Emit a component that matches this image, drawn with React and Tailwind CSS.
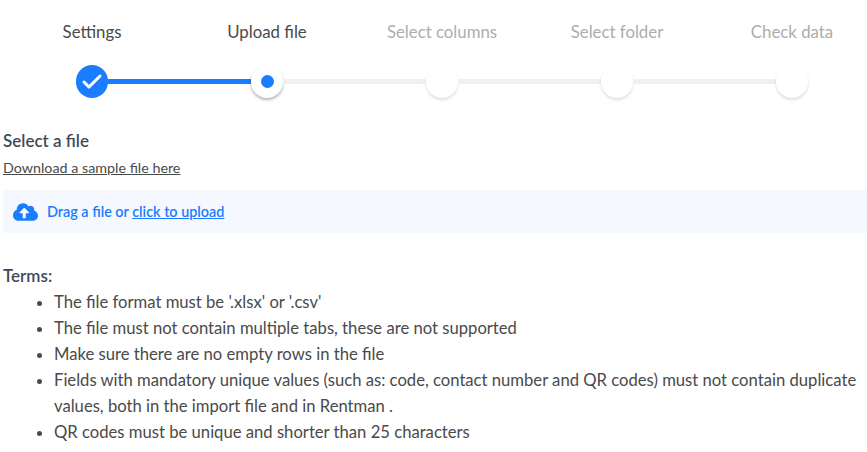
import React from 'react';
import { Check } from 'lucide-react';

const steps = [
  { label: 'Settings', state: 'done' },
  { label: 'Upload file', state: 'active' },
  { label: 'Select columns', state: 'todo' },
  { label: 'Select folder', state: 'todo' },
  { label: 'Check data', state: 'todo' },
];

const terms = [
  "The file format must be '.xlsx' or '.csv'",
  'The file must not contain multiple tabs, these are not supported',
  'Make sure there are no empty rows in the file',
  'Fields with mandatory unique values (such as: code, contact number and QR codes) must not contain duplicate values, both in the import file and in Rentman .',
  'QR codes must be unique and shorter than 25 characters',
];

function StepDot({ state }) {
  if (state === 'done') {
    return (
      <div className="w-8 h-[33px] shrink-0 rounded-full bg-[#1a7dff] text-white flex items-center justify-center">
        <Check size={24} strokeWidth={3} />
      </div>
    );
  }
  if (state === 'active') {
    return (
      <div className="w-8 h-[33px] shrink-0 rounded-full bg-white flex items-center justify-center shadow-[0_2px_3px_rgba(0,0,0,0.3)]">
        <div className="w-[13px] h-[13px] rounded-full bg-[#1a7dff]" />
      </div>
    );
  }
  return <div className="w-8 h-[33px] shrink-0 rounded-full bg-white shadow-[0_2px_3px_rgba(0,0,0,0.13)]" />;
}

export default function App() {
  return (
    <div className="w-[867px] h-[452px] overflow-hidden bg-white font-['Lato','Noto_Sans',sans-serif] text-[#4a4a4a]">
      <div className="flex w-[875px] ml-[4.5px] pt-[21px]">
        {steps.map((step) => (
          <div
            key={step.label}
            className={`w-[175px] shrink-0 text-center text-[16.8px] leading-[22px] ${step.state === 'todo' ? 'text-[#adadad]' : 'text-[#4a4a4a]'}`}
          >
            {step.label}
          </div>
        ))}
      </div>

      <div className="flex items-center ml-[76px] mt-[22px] w-[748px]">
        {steps.map((step, i) => (
          <React.Fragment key={step.label}>
            <StepDot state={step.state} />
            {i < steps.length - 1 && (
              <div className={`w-[143px] h-[5px] ${i === 0 ? 'bg-[#1a7dff]' : 'bg-[#f0f0f0]'}`} />
            )}
          </React.Fragment>
        ))}
      </div>

      <div className="pl-[3px] mt-[32px]">
        <h2 className="text-[17px] leading-[22px] font-semibold text-[#3f4a59]">Select a file</h2>
        <a className="block mt-[6px] text-[14.3px] leading-[20px] underline text-[#4a4a4a]">Download a sample file here</a>

        <div className="flex items-center mt-[12px] h-[43px] pl-[10px] bg-[#f5f8ff] text-[#1a7dff] text-[14.4px] font-semibold">
          <svg viewBox="0 0 640 512" className="w-[25px] h-[20px] fill-current">
            <path d="M537.6 226.6c4.1-10.7 6.4-22.4 6.4-34.6 0-53-43-96-96-96-19.7 0-38.1 6-53.3 16.2C367 64.2 315.3 32 256 32c-88.4 0-160 71.6-160 160 0 2.7.1 5.4.2 8.1C40.2 219.8 0 273.2 0 336c0 79.5 64.5 144 144 144h368c70.7 0 128-57.3 128-128 0-61.9-44-113.6-102.4-125.4zM393.4 288H328v112c0 8.8-7.2 16-16 16h-48c-8.8 0-16-7.2-16-16V288h-65.4c-14.3 0-21.4-17.2-11.3-27.3l105.4-105.4c6.2-6.2 16.4-6.2 22.6 0l105.4 105.4c10.1 10.1 2.9 27.3-11.3 27.3z" />
          </svg>
          <span className="ml-[9px]">
            Drag a file or <a className="underline">click to upload</a>
          </span>
        </div>

        <h3 className="mt-[32px] text-[17px] leading-[22px] font-semibold text-[#3f4a59]">Terms:</h3>
        <ul className="list-disc mt-[2px] pl-[51px] text-[16.65px] leading-[26px] text-[#4a4a4a]">
          {terms.map((term) => (
            <li key={term}>{term}</li>
          ))}
        </ul>
      </div>
    </div>
  );
}
